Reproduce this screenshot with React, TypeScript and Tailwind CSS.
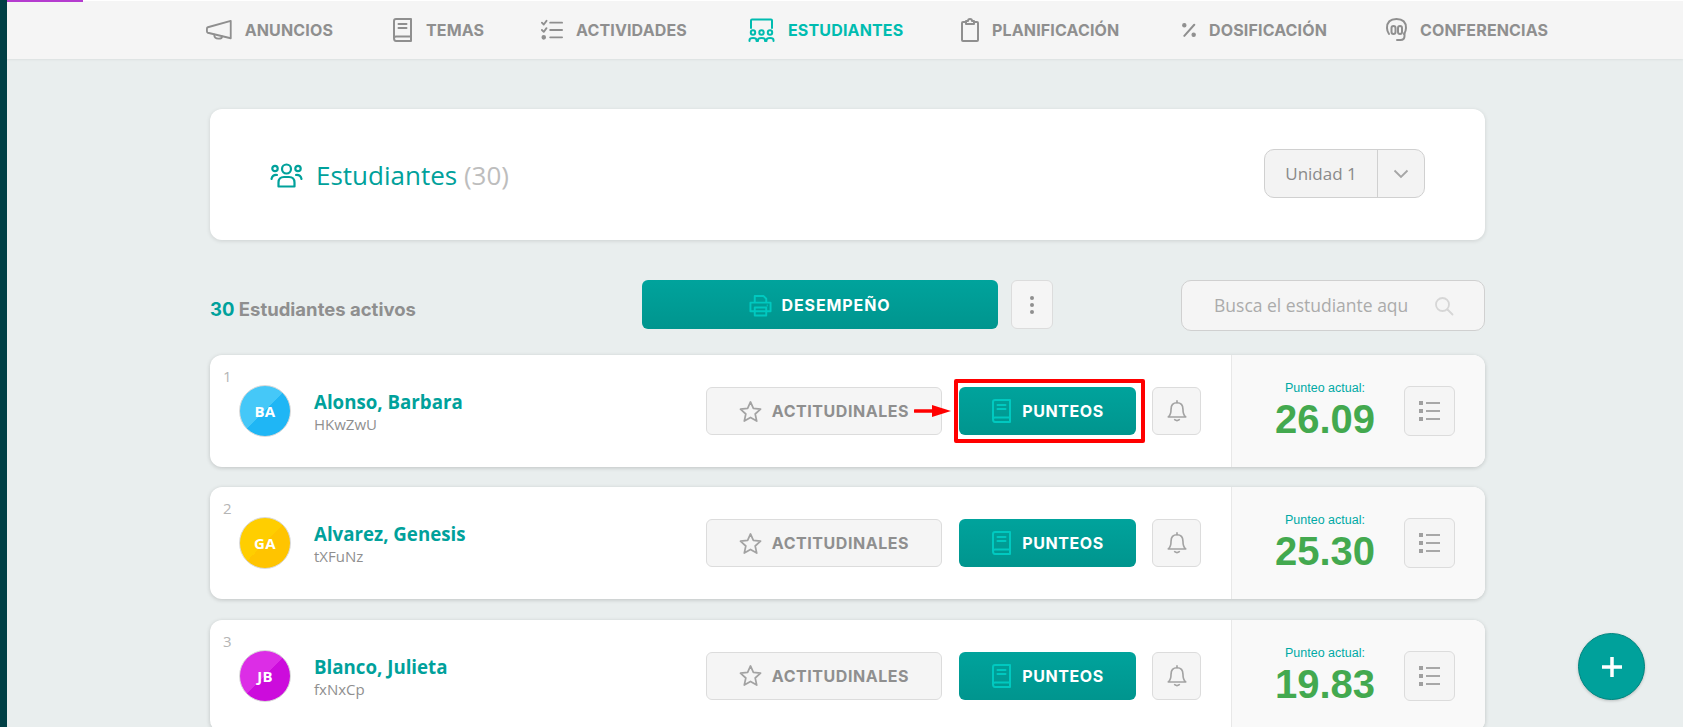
import type { ReactNode } from "react";

const head = "font-['Inter','Liberation_Sans',sans-serif] font-bold";
const body = "font-['Open_Sans','Liberation_Sans',sans-serif]";

function Icon({ size, color, children, w = 24 }: { size: number; color: string; children: ReactNode; w?: number }) {
  return (
    <svg
      width={size * (w / 24)}
      height={size}
      viewBox={`0 0 ${w} 24`}
      fill="none"
      stroke={color}
      strokeWidth="2"
      strokeLinecap="round"
      strokeLinejoin="round"
      className="shrink-0"
    >
      {children}
    </svg>
  );
}

const navItems: { label: string; width: number; gap: number; active?: boolean; icon: (c: string) => ReactNode }[] = [
  {
    label: "ANUNCIOS",
    width: 126,
    gap: 60,
    icon: (c) => (
      <Icon size={22} color={c} w={28}>
        <path d="M27 2 L2 9 Q1 9.300 1 10.500 V13.500 Q1 14.700 2 15 L27 21 Z" />
        <path d="M9 17 Q9 21.500 13.500 21.500 Q17.500 21.500 17.500 19" />
      </Icon>
    ),
  },
  {
    label: "TEMAS",
    width: 90,
    gap: 59,
    icon: (c) => (
      <Icon size={24} color={c} w={21}>
        <path d="M2 20 V3 Q2 1 4 1 H19 V23 H4 Q2 23 2 20 Q2 18.500 4 18.500 H19" />
        <path d="M6.500 6 H14.500 M6.500 10 H14.500" />
      </Icon>
    ),
  },
  {
    label: "ACTIVIDADES",
    width: 146,
    gap: 61,
    icon: (c) => (
      <Icon size={22} color={c}>
        <path d="M10 4 H23 M10 12 H23 M10 20 H23" />
        <path d="M1 4 L3 6 L6 2 M1 12 L3 14 L6 10" />
        <circle cx="3" cy="20" r="1.500" fill={c} />
      </Icon>
    ),
  },
  {
    label: "ESTUDIANTES",
    width: 152,
    gap: 61,
    active: true,
    icon: (c) => (
      <Icon size={24} color={c} w={27}>
        <path d="M3 10 V2.500 Q3 1.500 4 1.500 H23 Q24 1.500 24 2.500 V10" />
        <circle cx="5" cy="14.500" r="2.200" />
        <circle cx="13.500" cy="14.500" r="2.200" />
        <circle cx="22" cy="14.500" r="2.200" />
        <path d="M1.500 23 V22 Q1.500 20 5 20 Q8.500 20 8.500 22 V23 M10 23 V22 Q10 20 13.500 20 Q17 20 17 22 V23 M18.500 23 V22 Q18.500 20 22 20 Q25.500 20 25.500 22 V23" />
      </Icon>
    ),
  },
  {
    label: "PLANIFICACIÓN",
    width: 161,
    gap: 60,
    icon: (c) => (
      <Icon size={24} color={c} w={18}>
        <path d="M5 4 H2 Q1 4 1 5 V22 Q1 23 2 23 H16 Q17 23 17 22 V5 Q17 4 16 4 H13" />
        <path d="M5 6 V3 H7 Q7 1 9 1 Q11 1 11 3 H13 V6 Z" />
      </Icon>
    ),
  },
  {
    label: "DOSIFICACIÓN",
    width: 167,
    gap: 37,
    icon: (c) => (
      <Icon size={14} color={c}>
        <path d="M21 3 L4 22" strokeWidth="3.500" />
        <circle cx="4" cy="4" r="2.800" fill={c} />
        <circle cx="20" cy="20" r="2.800" fill={c} />
      </Icon>
    ),
  },
  {
    label: "CONFERENCIAS",
    width: 164,
    gap: 0,
    icon: (c) => (
      <Icon size={24} color={c} w={21}>
        <path d="M3 16 Q1 13 1 10 Q1 1 10.500 1 Q20 1 20 10 Q20 13 18 16" />
        <path d="M18.500 15 V18 Q18.500 22 14.500 22 H11" />
        <rect x="5.500" y="8" width="4" height="8" rx="2" />
        <rect x="12" y="8" width="4" height="8" rx="2" />
      </Icon>
    ),
  },
];

const students = [
  { n: 1, name: "Alonso, Barbara", code: "HKwZwU", initials: "BA", score: "26.09", avatar: "bg-[linear-gradient(135deg,#45c8f8_50%,#1fb6f5_50%)]" },
  { n: 2, name: "Alvarez, Genesis", code: "tXFuNz", initials: "GA", score: "25.30", avatar: "bg-[linear-gradient(135deg,#ffce00_50%,#ffc400_50%)]" },
  { n: 3, name: "Blanco, Julieta", code: "fxNxCp", initials: "JB", score: "19.83", avatar: "bg-[linear-gradient(135deg,#dc2de6_50%,#cc0cdc_50%)]" },
];

function Row({ s }: { s: (typeof students)[number] }) {
  return (
    <div className="flex h-[112px] shrink-0 overflow-hidden rounded-[12px] bg-white shadow-[0_1px_4px_rgba(0,0,0,0.18)]">
      <div className="flex flex-1 items-center pl-[13px]">
        <div className={`w-[16px] self-start pt-[13px] text-[15px] leading-[16px] text-[#b5b5b5] ${body}`}>{s.n}</div>
        <div
          className={`flex h-[52px] w-[52px] items-center justify-center rounded-full border border-[#d9d9d9] text-[15px] font-bold tracking-[0.3px] text-white ${body} ${s.avatar}`}
        >
          {s.initials}
        </div>
        <div className={`ml-[23px] flex w-[392px] flex-col pt-[2px] ${body}`}>
          <span className="text-[18.700px] leading-[24px] font-bold text-[#00a19b]">{s.name}</span>
          <span className="text-[15px] leading-[20px] text-[#8f8f8f]">{s.code}</span>
        </div>
        <button className={`flex h-[48px] w-[236px] items-center justify-center gap-[10px] rounded-[6px] border border-[#dcdcdc] bg-[#f5f5f5] text-[16px] tracking-[0.55px] text-[#8f8f8f] ${head}`}>
          <svg width="23" height="23" viewBox="0 0 24 24" fill="none" stroke="#a3a3a3" strokeWidth="1.800" strokeLinejoin="round">
            <path d="M12 2 L15 8.800 L22.500 9.600 L16.900 14.600 L18.500 22 L12 18.200 L5.500 22 L7.100 14.600 L1.500 9.600 L9 8.800 Z" />
          </svg>
          ACTITUDINALES
        </button>
        <div className="relative ml-[17px]">
          <button className={`flex h-[48px] w-[177px] items-center justify-center gap-[10px] rounded-[6px] bg-[linear-gradient(180deg,#00a39c,#00958e)] text-[16px] tracking-[0.55px] text-white ${head}`}>
            <Icon size={24} color="#00c9c0" w={21}>
              <path d="M2 20 V3 Q2 1 4 1 H19 V23 H4 Q2 23 2 20 Q2 18.500 4 18.500 H19" />
              <path d="M6.500 6 H14.500 M6.500 10 H14.500" />
            </Icon>
            PUNTEOS
          </button>
          {s.n === 1 && (
            <>
              <div className="absolute top-[-8px] right-[-9px] bottom-[-8px] left-[-5px] rounded-[2px] border-4 border-[#ff0000]" />
              <svg width="38" height="14" viewBox="0 0 38 14" className="absolute top-[17px] left-[-45px]">
                <path d="M1 7 L20 7" stroke="#ff0000" strokeWidth="3.500" strokeLinecap="round" />
                <path d="M18 1 L37 7 L18 13 Z" fill="#ff0000" />
              </svg>
            </>
          )}
        </div>
        <button className="ml-[16px] flex h-[48px] w-[49px] items-center justify-center rounded-[6px] border border-[#dcdcdc] bg-[#f5f5f5]">
          <svg width="22" height="22" viewBox="0 0 24 24" fill="none" stroke="#a3a3a3" strokeWidth="1.800" strokeLinecap="round" strokeLinejoin="round">
            <path d="M12 3 Q18.500 3 18.500 10 Q18.500 16 21.500 18.500 H2.500 Q5.500 16 5.500 10 Q5.500 3 12 3 Z" />
            <path d="M12 1 V3 M9.500 21.500 Q12 23.500 14.500 21.500" />
          </svg>
        </button>
      </div>
      <div className="flex w-[254px] items-center border-l border-[#e8e8e8] bg-[#f9f9f9]">
        <div className="flex w-[172px] flex-col items-center pt-[2px] pl-[14px] font-['Liberation_Sans',sans-serif]">
          <span className="text-[12.500px] leading-[14px] text-[#00a9a5]">Punteo actual:</span>
          <span className="text-[40px] leading-[48px] font-bold text-[#43a94f]">{s.score}</span>
        </div>
        <button className="flex h-[50px] w-[51px] flex-col items-center justify-center gap-[4px] rounded-[6px] border border-[#dcdcdc] bg-[#f5f5f5]">
          {[0, 1, 2].map((i) => (
            <span key={i} className="flex items-center gap-[3px]">
              <span className="h-[4px] w-[4px] bg-[#a0a0a0]" />
              <span className="h-[2px] w-[14px] bg-[#a8a8a8]" />
            </span>
          ))}
        </button>
      </div>
    </div>
  );
}

export default function App() {
  return (
    <div className="relative flex h-[727px] overflow-hidden bg-[#e9eeee]">
      <div className="w-[7px] shrink-0 bg-[#003f45]" />
      <div className="flex min-w-0 flex-1 flex-col">
        <header className="relative h-[59px] shrink-0 border-t border-white bg-[#f5f5f5] shadow-[0_1px_2px_rgba(0,0,0,0.06)]">
          <div className="absolute top-[-1px] left-0 h-[2px] w-[76px] bg-[#b53ccf]" />
          <nav className="flex h-full items-center pl-[199px]">
            {navItems.map((item) => {
              const c = item.active ? "#00bcb0" : "#8f8f8f";
              return (
                <div
                  key={item.label}
                  className="flex shrink-0 items-center gap-[13px]"
                  style={{ width: item.width, marginRight: item.gap }}
                >
                  {item.icon(c)}
                  <span className={`text-[16px] tracking-[0.15px] whitespace-nowrap ${head} ${item.active ? "text-[#00bcb0]" : "text-[#8f8f8f]"}`}>
                    {item.label}
                  </span>
                </div>
              );
            })}
          </nav>
        </header>

        <main className="ml-[203px] flex w-[1275px] flex-col pt-[50px]">
          <section className="flex h-[131px] items-center justify-between rounded-[12px] bg-white pr-[60px] pb-[2px] pl-[60px] shadow-[0_1px_4px_rgba(0,0,0,0.12)]">
            <div className={`flex items-center gap-[13px] pt-[4px] text-[26px] text-[#00a19b] ${body}`}>
              <svg width="33" height="25" viewBox="0 0 33 25" fill="none" stroke="#00a19b" strokeWidth="2.200" strokeLinecap="round" strokeLinejoin="round">
                <circle cx="16.500" cy="6" r="4.500" />
                <circle cx="5" cy="5.500" r="2.700" />
                <circle cx="28" cy="5.500" r="2.700" />
                <path d="M8.500 23.500 V19.500 Q8.500 14 14 14 H19 Q24.500 14 24.500 19.500 V23.500 Z" />
                <path d="M1.500 16 Q2.500 11.500 7 12 M31.500 16 Q30.500 11.500 26 12" />
              </svg>
              <span>
                Estudiantes <span className="text-[#bdbdbd]">(30)</span>
              </span>
            </div>
            <div className={`flex h-[49px] w-[161px] overflow-hidden rounded-[10px] border border-[#d0d0d0] bg-[#f3f3f3] text-[#8a8a8a] ${body}`}>
              <div className="flex w-[113px] items-center justify-center border-r border-[#d0d0d0] text-[17px]">Unidad 1</div>
              <div className="flex flex-1 items-center justify-center">
                <svg width="16" height="10" viewBox="0 0 16 10" fill="none" stroke="#a5a5a5" strokeWidth="1.800">
                  <path d="M1.500 1.500 L8 8 L14.500 1.500" />
                </svg>
              </div>
            </div>
          </section>

          <section className="mt-[40px] flex h-[51px] items-start">
            <div className={`w-[432px] pt-[16px] text-[18.500px] leading-[26px] text-[#8f8f8f] ${head}`}>
              <span className="text-[#00a19b]">30</span> Estudiantes activos
            </div>
            <button className={`flex h-[49px] w-[356px] items-center justify-center gap-[9px] rounded-[6px] bg-[linear-gradient(180deg,#00a39c,#00958e)] pt-[1px] text-[16px] tracking-[0.9px] text-white ${head}`}>
              <svg width="23" height="23" viewBox="0 0 24 24" fill="none" stroke="#00c9c0" strokeWidth="2" strokeLinejoin="round">
                <path d="M6 9 V2 H15 L18 5 V9 M1.500 9 H22.500 V18 H1.500 Z M6 14 H18 V22.500 H6 Z" />
                <path d="M18.500 12 H19.500" />
              </svg>
              DESEMPEÑO
            </button>
            <button className="ml-[13px] flex h-[49px] w-[42px] flex-col items-center justify-center gap-[3px] rounded-[6px] border border-[#dcdcdc] bg-[#f5f5f5]">
              <span className="h-[4px] w-[4px] rounded-full bg-[#8f8f8f]" />
              <span className="h-[4px] w-[4px] rounded-full bg-[#8f8f8f]" />
              <span className="h-[4px] w-[4px] rounded-full bg-[#8f8f8f]" />
            </button>
            <div className={`ml-[128px] flex h-[51px] w-[304px] items-center rounded-[10px] border border-[#d0d0d0] bg-[#f5f5f5] pr-[30px] pl-[32px] text-[17.500px] text-[#ababab] ${body}`}>
              <span className="w-[194px] overflow-hidden whitespace-nowrap">Busca el estudiante aquí</span>
              <svg width="20" height="20" viewBox="0 0 20 20" fill="none" stroke="#d6d6d6" strokeWidth="1.800" strokeLinecap="round" className="ml-auto">
                <circle cx="8.500" cy="8.500" r="6.500" />
                <path d="M13.500 13.500 L18.500 18.500" />
              </svg>
            </div>
          </section>

          <section className="mt-[24px] flex flex-col gap-[20.400px]">
            {students.map((s) => (
              <Row key={s.n} s={s} />
            ))}
          </section>
        </main>
      </div>
      <button className="absolute top-[633px] left-[1578px] flex h-[67px] w-[67px] items-center justify-center rounded-full border border-[#00857f] bg-[#00a19b] shadow-[0_1px_3px_rgba(0,0,0,0.2)]">
        <svg width="22" height="22" viewBox="0 0 22 22" stroke="white" strokeWidth="3.500">
          <path d="M11 1 V21 M1 11 H21" />
        </svg>
      </button>
    </div>
  );
}
